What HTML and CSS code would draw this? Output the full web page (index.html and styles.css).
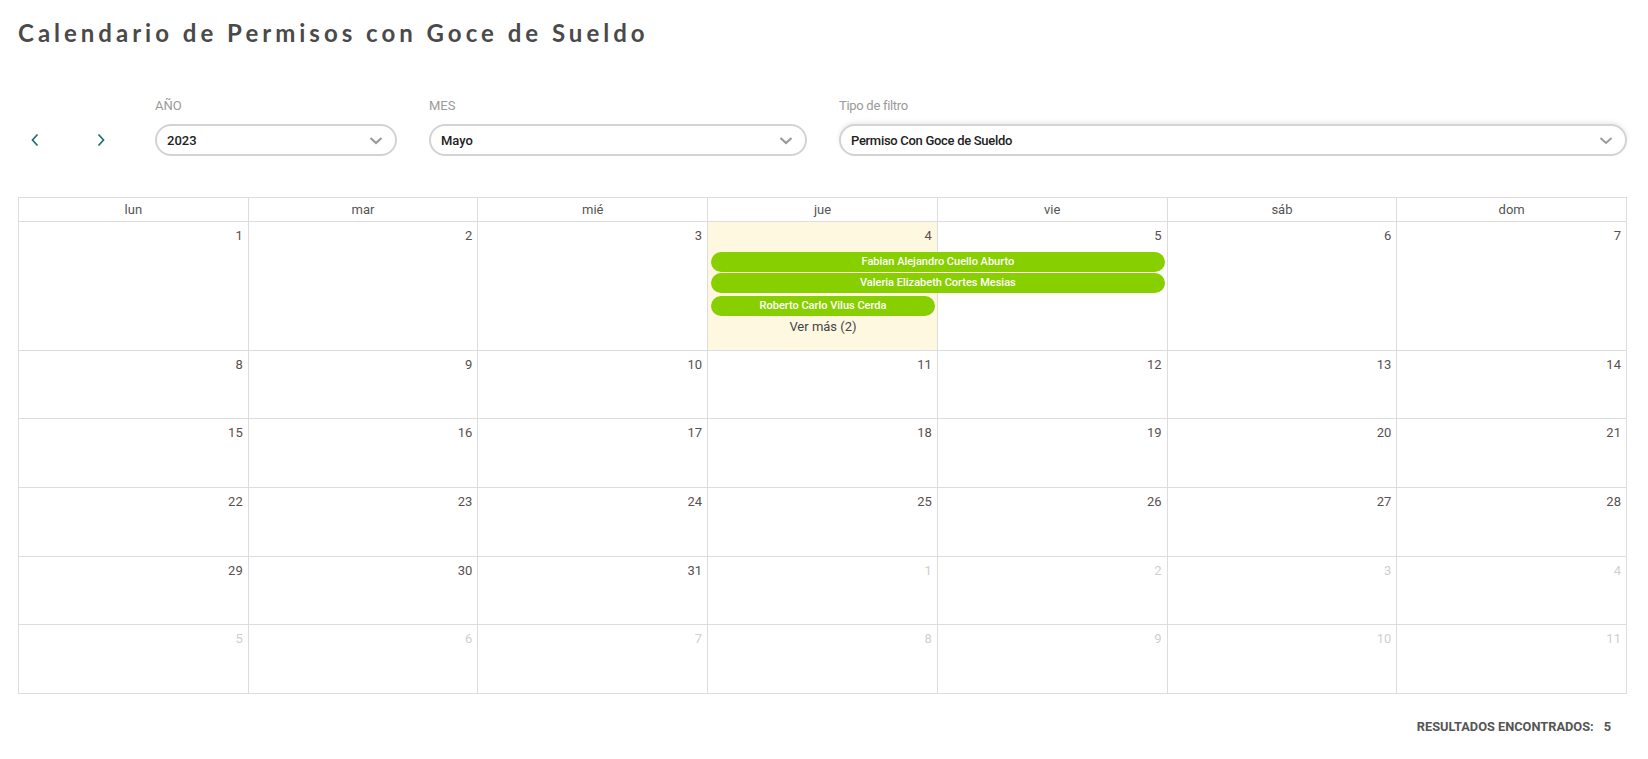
FILE: index.html
```html
<!DOCTYPE html>
<html lang="es">
<head>
<meta charset="utf-8">
<title>Calendario de Permisos con Goce de Sueldo</title>
<link rel="stylesheet" href="styles.css">
</head>
<body>
<div class="page">
  <h1 class="title">Calendario de Permisos con Goce de Sueldo</h1>

  <div class="filters">
    <div class="nav">
      <button class="nav-btn" aria-label="Anterior">
        <svg width="10" height="14" viewBox="0 0 10 14"><path d="M7.5 1.5 L2.5 7 L7.5 12.5" fill="none" stroke="#236b6b" stroke-width="1.7"/></svg>
      </button>
      <button class="nav-btn" aria-label="Siguiente">
        <svg width="10" height="14" viewBox="0 0 10 14"><path d="M2.5 1.5 L7.5 7 L2.5 12.5" fill="none" stroke="#236b6b" stroke-width="1.7"/></svg>
      </button>
    </div>
    <div class="field field-year">
      <label class="label">AÑO</label>
      <div class="select"><span>2023</span>
        <svg class="caret" width="14" height="9" viewBox="0 0 14 9"><path d="M1.5 2 L7 7 L12.5 2" fill="none" stroke="#999" stroke-width="2.2"/></svg>
      </div>
    </div>
    <div class="field field-month">
      <label class="label">MES</label>
      <div class="select"><span>Mayo</span>
        <svg class="caret" width="14" height="9" viewBox="0 0 14 9"><path d="M1.5 2 L7 7 L12.5 2" fill="none" stroke="#999" stroke-width="2.2"/></svg>
      </div>
    </div>
    <div class="field field-type">
      <label class="label label-cond">Tipo de filtro</label>
      <div class="select select-shadow"><span class="cond">Permiso Con Goce de Sueldo</span>
        <svg class="caret" width="14" height="9" viewBox="0 0 14 9"><path d="M1.5 2 L7 7 L12.5 2" fill="none" stroke="#999" stroke-width="1.8"/></svg>
      </div>
    </div>
  </div>

  <div class="calendar">
    <div class="head">
      <div>lun</div><div>mar</div><div>mié</div><div>jue</div><div>vie</div><div>sáb</div><div>dom</div>
    </div>

    <div class="week week-first">
      <div class="day c1"><span class="num">1</span></div>
      <div class="day c2"><span class="num">2</span></div>
      <div class="day c3"><span class="num">3</span></div>
      <div class="day c4 today"><span class="num">4</span></div>
      <div class="day c5"><span class="num">5</span></div>
      <div class="day c6"><span class="num">6</span></div>
      <div class="day c7"><span class="num">7</span></div>
      <div class="event ev1">Fabian Alejandro Cuello Aburto</div>
      <div class="event ev2">Valeria Elizabeth Cortes Mesias</div>
      <div class="event ev3">Roberto Carlo Vilus Cerda</div>
      <div class="more">Ver más (2)</div>
    </div>

    <div class="week h68">
      <div class="day"><span class="num">8</span></div>
      <div class="day"><span class="num">9</span></div>
      <div class="day"><span class="num">10</span></div>
      <div class="day"><span class="num">11</span></div>
      <div class="day"><span class="num">12</span></div>
      <div class="day"><span class="num">13</span></div>
      <div class="day"><span class="num">14</span></div>
    </div>
    <div class="week h69">
      <div class="day"><span class="num">15</span></div>
      <div class="day"><span class="num">16</span></div>
      <div class="day"><span class="num">17</span></div>
      <div class="day"><span class="num">18</span></div>
      <div class="day"><span class="num">19</span></div>
      <div class="day"><span class="num">20</span></div>
      <div class="day"><span class="num">21</span></div>
    </div>
    <div class="week h69">
      <div class="day"><span class="num">22</span></div>
      <div class="day"><span class="num">23</span></div>
      <div class="day"><span class="num">24</span></div>
      <div class="day"><span class="num">25</span></div>
      <div class="day"><span class="num">26</span></div>
      <div class="day"><span class="num">27</span></div>
      <div class="day"><span class="num">28</span></div>
    </div>
    <div class="week h68">
      <div class="day"><span class="num">29</span></div>
      <div class="day"><span class="num">30</span></div>
      <div class="day"><span class="num">31</span></div>
      <div class="day other"><span class="num">1</span></div>
      <div class="day other"><span class="num">2</span></div>
      <div class="day other"><span class="num">3</span></div>
      <div class="day other"><span class="num">4</span></div>
    </div>
    <div class="week h69">
      <div class="day other"><span class="num">5</span></div>
      <div class="day other"><span class="num">6</span></div>
      <div class="day other"><span class="num">7</span></div>
      <div class="day other"><span class="num">8</span></div>
      <div class="day other"><span class="num">9</span></div>
      <div class="day other"><span class="num">10</span></div>
      <div class="day other"><span class="num">11</span></div>
    </div>
  </div>

  <div class="results">RESULTADOS ENCONTRADOS:<span class="count">5</span></div>
</div>
</body>
</html>
```

FILE: styles.css
```css
* { box-sizing: border-box; }
html, body { margin: 0; padding: 0; background: #fff; }
body { font-family: Roboto, "Liberation Sans", Arial, sans-serif; color: #333; }

.page { padding: 0 21px 0 18px; }

.title {
  margin: 0;
  padding-top: 17px;
  font-family: "Lato", "Open Sans", sans-serif;
  font-weight: 700;
  font-size: 24px;
  line-height: 32px;
  letter-spacing: 4px;
  color: #4a4a4a;
}

.filters {
  display: flex;
  align-items: flex-end;
  margin-top: 32px;
  height: 75px;
}
.nav {
  display: flex;
  width: 137px;
  height: 32px;
  align-items: center;
  padding-left: 12px;
}
.nav-btn {
  border: 0;
  background: transparent;
  padding: 0;
  width: 10px;
  height: 14px;
  display: flex;
  cursor: pointer;
  margin-right: 56px;
}
.field { display: flex; flex-direction: column; margin-right: 32px; }
.field-year { width: 242px; }
.field-month { width: 378px; }
.field-type { flex: 1; margin-right: 0; }

.label {
  font-size: 13px;
  color: #9a9a9a;
  line-height: 16px;
  margin-bottom: 10px;
}
.label-cond { letter-spacing: -0.3px; }

.select {
  height: 32px;
  border: 2px solid #d3d3d3;
  border-radius: 16px;
  display: flex;
  align-items: center;
  justify-content: space-between;
  padding: 0 12px 0 10px;
  font-size: 13px;
  font-weight: 500;
  color: #222;
  background: #fff;
}
.select-shadow { box-shadow: 0 -2px 4px rgba(0,0,0,0.08); }
.cond { letter-spacing: -0.3px; }
.caret { display: block; }

.calendar {
  margin-top: 41px;
  border-left: 1px solid #ddd;
  border-top: 1px solid #ddd;
}
.head {
  display: grid;
  grid-template-columns: repeat(7, 1fr);
}
.head div {
  height: 24px;
  line-height: 23px;
  text-align: center;
  font-size: 13px;
  color: #555;
  border-right: 1px solid #ddd;
  border-bottom: 1px solid #ddd;
}

.week {
  display: grid;
  grid-template-columns: repeat(7, 1fr);
}
.week-first {
  height: 129px;
  grid-template-rows: 30px 21px 21px 22px 1fr;
}
.h68 { height: 68px; }
.h69 { height: 69px; }

.day {
  border-right: 1px solid #ddd;
  border-bottom: 1px solid #ddd;
  text-align: right;
  padding: 3px 5px 0 0;
}
.week-first .day { grid-row: 1 / -1; }
.c1 { grid-column: 1; } .c2 { grid-column: 2; } .c3 { grid-column: 3; }
.c4 { grid-column: 4; } .c5 { grid-column: 5; } .c6 { grid-column: 6; } .c7 { grid-column: 7; }
.num { font-size: 13px; color: #585050; line-height: 17px; }
.today { background: #fff8e1; }
.other .num { color: #cfcfcf; }

.event {
  background: #88cf00;
  color: #fff;
  font-size: 11px;
  font-weight: 500;
  text-align: center;
  height: 20px;
  line-height: 20px;
  border-radius: 10px;
  margin: 0 3px;
  white-space: nowrap;
  overflow: hidden;
}
.ev1 { grid-row: 2; grid-column: 4 / 6; }
.ev2 { grid-row: 3; grid-column: 4 / 6; }
.ev3 { grid-row: 4; grid-column: 4 / 5; align-self: end; }
.more {
  grid-row: 5;
  grid-column: 4 / 5;
  text-align: center;
  font-size: 13px;
  color: #444;
  padding-top: 3px;
}

.results {
  text-align: right;
  font-size: 12.8px;
  font-weight: 700;
  color: #555;
  margin-top: 25px;
  padding-right: 16px;
}
.results .count { margin-left: 10px; }
```
